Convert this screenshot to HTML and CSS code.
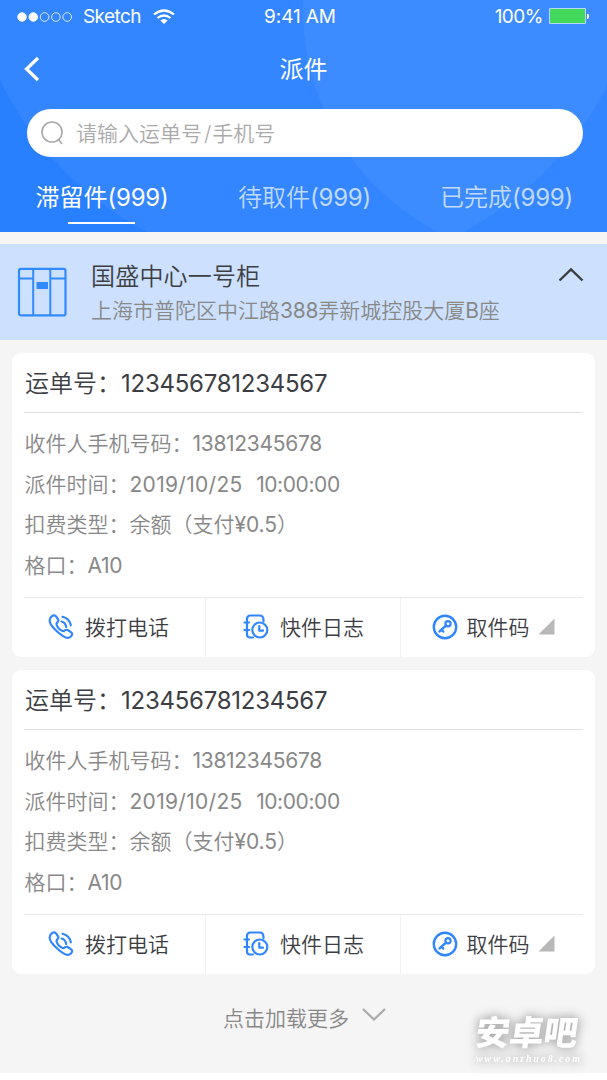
FILE: index.html
```html
<!DOCTYPE html>
<html lang="zh-CN">
<head>
<meta charset="utf-8">
<title>派件</title>
<link rel="stylesheet" href="styles.css">
</head>
<body>
<svg class="defs" width="0" height="0">
  <symbol id="phone" viewBox="0 0 26 26"><g fill="none" stroke="#2f86ff" stroke-width="2.200" stroke-linecap="round" stroke-linejoin="round"><path d="M3 3.300C5 .8 7 .8 8.600 3.200L10.200 5.700C11.200 7.300 8.200 8.700 8.500 10.200C9.200 12.800 12 16 14.700 17.100C16.500 17.700 17.600 14.800 19.600 16L22.900 18.100C25 19.500 24.300 22 21.300 23.600C16.500 26 .2 11 1.800 5.700Q2.100 4.300 3 3.300Z"/><path d="M13.500 7.500Q17.500 8.500 18.200 13M14.500 2.800Q21.500 4.500 22.800 11.300"/></g></symbol>
  <symbol id="log" viewBox="0 0 26 26"><g fill="none" stroke="#2f86ff" stroke-width="2.200" stroke-linecap="round" stroke-linejoin="round"><path d="M10 23.500H7Q4 23.500 4 20.500V5Q4 1.500 7.500 1.500H16.500Q20.500 1.500 20.500 6V7.500M1.500 8.500H6M1.500 16H6"/><circle cx="16.800" cy="16" r="7.500"/><path d="M16.300 12V16.700H20"/></g></symbol>
  <symbol id="key" viewBox="0 0 26 26"><g fill="none" stroke="#2f86ff" stroke-width="2.200" stroke-linecap="round"><circle cx="13" cy="13" r="11.200" stroke-width="2.400"/><circle cx="16" cy="9.700" r="2.600"/><path d="M14 11.600L7.600 17.400M9.800 16L11.200 17.500" stroke-width="2.500"/></g></symbol>
</svg>
<header class="header">
  <svg class="header-bg" width="607" height="232" viewBox="0 0 607 232"><g fill="#fff" fill-opacity=".05"><circle cx="305" cy="-68" r="339"/><circle cx="553" cy="10" r="250"/></g></svg>
  <div class="status">
    <div class="carrier">
      <svg width="56" height="12" viewBox="0 0 56 12"><g fill="#fff" stroke="#fff" stroke-width=".8"><circle cx="5" cy="6" r="4.300"/><circle cx="16.300" cy="6" r="4.300"/><g fill="none"><circle cx="27.600" cy="6" r="4.300"/><circle cx="38.900" cy="6" r="4.300"/><circle cx="50.200" cy="6" r="4.300"/></g></g></svg>
      <span class="status-name">Sketch</span>
      <svg width="22" height="16" viewBox="0 0 22 16"><g fill="none" stroke="#fff" stroke-width="2.200"><path d="M1 5.500Q11-2.500 21 5.500M4.500 9Q11 4 17.500 9"/></g><path d="M7.300 11.500Q11 8.500 14.700 11.500L11 15Z" fill="#fff"/></svg>
    </div>
    <span class="clock">9:41 AM</span>
    <div class="power"><span class="percent">100%</span><svg width="41" height="17" viewBox="0 0 41 17"><path d="M.5.5H36.500V15.500H.5Z" fill="#42d85b" stroke="#b9d6f5"/><path d="M38 6H39Q40 6 40 8T39 11H38Z" fill="#fff"/></svg></div>
  </div>
  <div class="nav">
    <svg class="back" width="18" height="28" viewBox="0 0 18 28"><path d="M16 3L4.500 14L16 25" fill="none" stroke="#fff" stroke-width="3.200"/></svg>
    <h1 class="title">派件</h1>
  </div>
  <div class="search">
    <svg width="24" height="26" viewBox="0 0 24 26"><g fill="none" stroke="#aaa" stroke-width="1.600"><circle cx="12" cy="12" r="10"/><path d="M18.500 19.500L22 24"/></g></svg>
    <span class="placeholder">请输入运单号<span class="slash">/</span>手机号</span>
  </div>
  <nav class="tabs">
    <div class="tab active">滞留件<span class="count">(999)</span></div>
    <div class="tab">待取件<span class="count">(999)</span></div>
    <div class="tab">已完成<span class="count">(999)</span></div>
  </nav>
</header>
<main class="main">
  <section class="cabinet">
    <svg class="cabinet-icon" width="50" height="50" viewBox="0 0 50 50"><g fill="none" stroke="#338aff" stroke-width="2.200"><rect x="2" y="1.800" width="46.500" height="46.600" rx="2"/><path d="M16.200 2V48M33.300 2V48M2 11.500H16M33.500 11.500H48" stroke-width="2"/></g><path d="M19.500 15H31V22H19.500Z" fill="#338aff"/></svg>
    <div class="cabinet-text"><div class="cabinet-name">国盛中心一号柜</div><div class="address">上海市普陀区中江路<span class="num">388</span>弄新城控股大厦<span class="num">B</span>座</div></div>
    <svg class="collapse" width="28" height="18" viewBox="0 0 28 18"><path d="M2.500 14.500L14 3.500L25.500 14.500" fill="none" stroke="#3a3d42" stroke-width="2.400"/></svg>
  </section>
  <article class="card">
    <h2 class="order">运单号：<span class="num order-num">123456781234567</span></h2>
    <div class="details">
      <p>收件人手机号码：<span class="num phone-num">13812345678</span></p>
      <p>派件时间：<span class="num date">2019/10/25</span><span class="num time">10:00:00</span></p>
      <p>扣费类型：余额（支付<span class="num fee">¥0.5</span>）</p>
      <p>格口：<span class="num">A10</span></p>
    </div>
    <div class="actions">
      <div class="action call"><svg width="26" height="26"><use href="#phone"/></svg><span>拨打电话</span></div>
      <div class="action journal"><svg width="26" height="26"><use href="#log"/></svg><span>快件日志</span></div>
      <div class="action code"><svg width="26" height="26"><use href="#key"/></svg><span>取件码</span><i class="corner"></i></div>
    </div>
  </article>
  <article class="card">
    <h2 class="order">运单号：<span class="num order-num">123456781234567</span></h2>
    <div class="details">
      <p>收件人手机号码：<span class="num phone-num">13812345678</span></p>
      <p>派件时间：<span class="num date">2019/10/25</span><span class="num time">10:00:00</span></p>
      <p>扣费类型：余额（支付<span class="num fee">¥0.5</span>）</p>
      <p>格口：<span class="num">A10</span></p>
    </div>
    <div class="actions">
      <div class="action call"><svg width="26" height="26"><use href="#phone"/></svg><span>拨打电话</span></div>
      <div class="action journal"><svg width="26" height="26"><use href="#log"/></svg><span>快件日志</span></div>
      <div class="action code"><svg width="26" height="26"><use href="#key"/></svg><span>取件码</span><i class="corner"></i></div>
    </div>
  </article>
  <div class="more"><span>点击加载更多</span><svg width="26" height="16" viewBox="0 0 26 16"><path d="M2 2L13 12.500L24 2" fill="none" stroke="#aaa" stroke-width="2.200"/></svg></div>
  <div class="watermark"><div class="brand">安卓吧</div><div class="site">www.anzhuo8.com</div></div>
</main>
</body>
</html>
```
FILE: styles.css
```css
* { box-sizing: border-box; }
body { margin: 0; background: #fff; font-family: Inter, "Noto Sans CJK SC", sans-serif; font-weight: 350; color: #3c3e43; white-space: nowrap; }
svg { display: block; flex: none; }
h1, h2, p { margin: 0; font-weight: inherit; }
.defs { position: absolute; }
.num { font-weight: 400; letter-spacing: -.25px; }
.header { position: relative; height: 231.500px; background: #2980ff; color: #fff; overflow: hidden; }
.header-bg { position: absolute; left: 0; top: 0; }
.status, .nav, .search, .tabs { position: relative; }
.status { height: 33px; display: grid; grid-template-columns: 243px 80px 1fr; align-items: center; font-size: 19px; font-weight: 400; padding: 0 17px 0 17px; }
.carrier, .power { display: flex; align-items: center; }
.carrier { gap: 10px; }
.status-name { width: 60px; letter-spacing: -.6px; }
.clock { text-align: center; letter-spacing: -.1px; }
.power { justify-content: flex-end; gap: 6px; }
.percent { letter-spacing: -.5px; }
.nav { height: 76px; padding-top: 23px; text-align: center; }
.back { position: absolute; left: 22px; top: 22px; }
.title { font-size: 24px; line-height: 28px; font-weight: 400; }
.search { margin: 0 24.500px 0 26.500px; height: 48px; border-radius: 24px; background: #fff; display: flex; align-items: center; gap: 12px; padding-left: 13.500px; color: #aaa; font-size: 21px; }
.placeholder { padding-bottom: 2px; }
.slash { padding: 0 1px 0 2px; }
.tabs { display: grid; grid-template-columns: 204px 201px 203px; height: 67px; margin-top: 7px; }
.tab { font-size: 24px; line-height: 67px; text-align: center; color: rgba(255,255,255,.7); position: relative; }
.tab.active { color: #fff; font-weight: 400; }
.tab.active::after { content: ""; position: absolute; left: 67.500px; top: 57.500px; width: 67px; height: 2.500px; background: #fff; }
.count { font-weight: 400; letter-spacing: -.2px; }
.main { height: 841px; background: #f5f5f5; padding-top: 12.500px; position: relative; }
.cabinet { height: 96px; background: #cde1ff; display: flex; padding: 0 22px 0 17px; }
.cabinet-icon { margin-top: 23px; }
.cabinet-text { margin-left: 24px; flex: 1; padding-top: 16px; }
.cabinet-name { font-size: 24px; line-height: 34px; letter-spacing: .2px; }
.address { font-size: 21px; line-height: 34px; color: #888; }
.collapse { margin-top: 22px; }
.card { height: 304px; margin: 13px 12px 0; background: #fff; border-radius: 9px; padding: 0 12px; }
.card + .card { margin-top: 13px; }
.order { font-size: 24px; line-height: 62px; height: 60px; border-bottom: 1px solid #e1e1e1; padding-left: 1px; }
.details { height: 184px; padding: 11px 0 0 .5px; font-size: 21px; line-height: 40.500px; color: #888; }
.details p { height: 40.500px; }
.phone-num { letter-spacing: -.3px; }
.date { letter-spacing: .3px; }
.time { margin-left: 13.500px; letter-spacing: -.4px; }
.fee { letter-spacing: -.1px; }
.actions { display: grid; grid-template-columns: 182px 194.500px 1fr; height: 60px; border-top: 1px solid #e8e8e8; font-size: 21px; }
.action { display: flex; align-items: center; border-right: 1px solid #f1f1f1; padding-bottom: 2px; }
.action span { padding-bottom: 2px; }
.action.code { border: 0; }
.call { padding-left: 24px; gap: 11px; }
.journal { padding-left: 37px; gap: 11px; }
.code { padding-left: 31px; gap: 9px; }
.corner { width: 16px; height: 16px; margin-left: 0; background: #b8b8b8; clip-path: polygon(100% 0, 100% 100%, 0 100%); }
.more { display: flex; align-items: center; gap: 12px; padding: 28px 0 0 223px; color: #888; font-size: 21px; }
.more svg { margin-bottom: 5px; }
.watermark { position: absolute; left: 476px; top: 781px; color: #fff; filter: drop-shadow(0 0 5px #aaa) drop-shadow(0 0 4px #ccc); }
.brand { font-size: 34px; line-height: 40px; font-weight: 900; transform: skewX(-8deg); }
.site { font-family: "Liberation Serif", serif; font-size: 10px; line-height: 12px; font-weight: 700; font-style: italic; letter-spacing: 1.900px; }
```
